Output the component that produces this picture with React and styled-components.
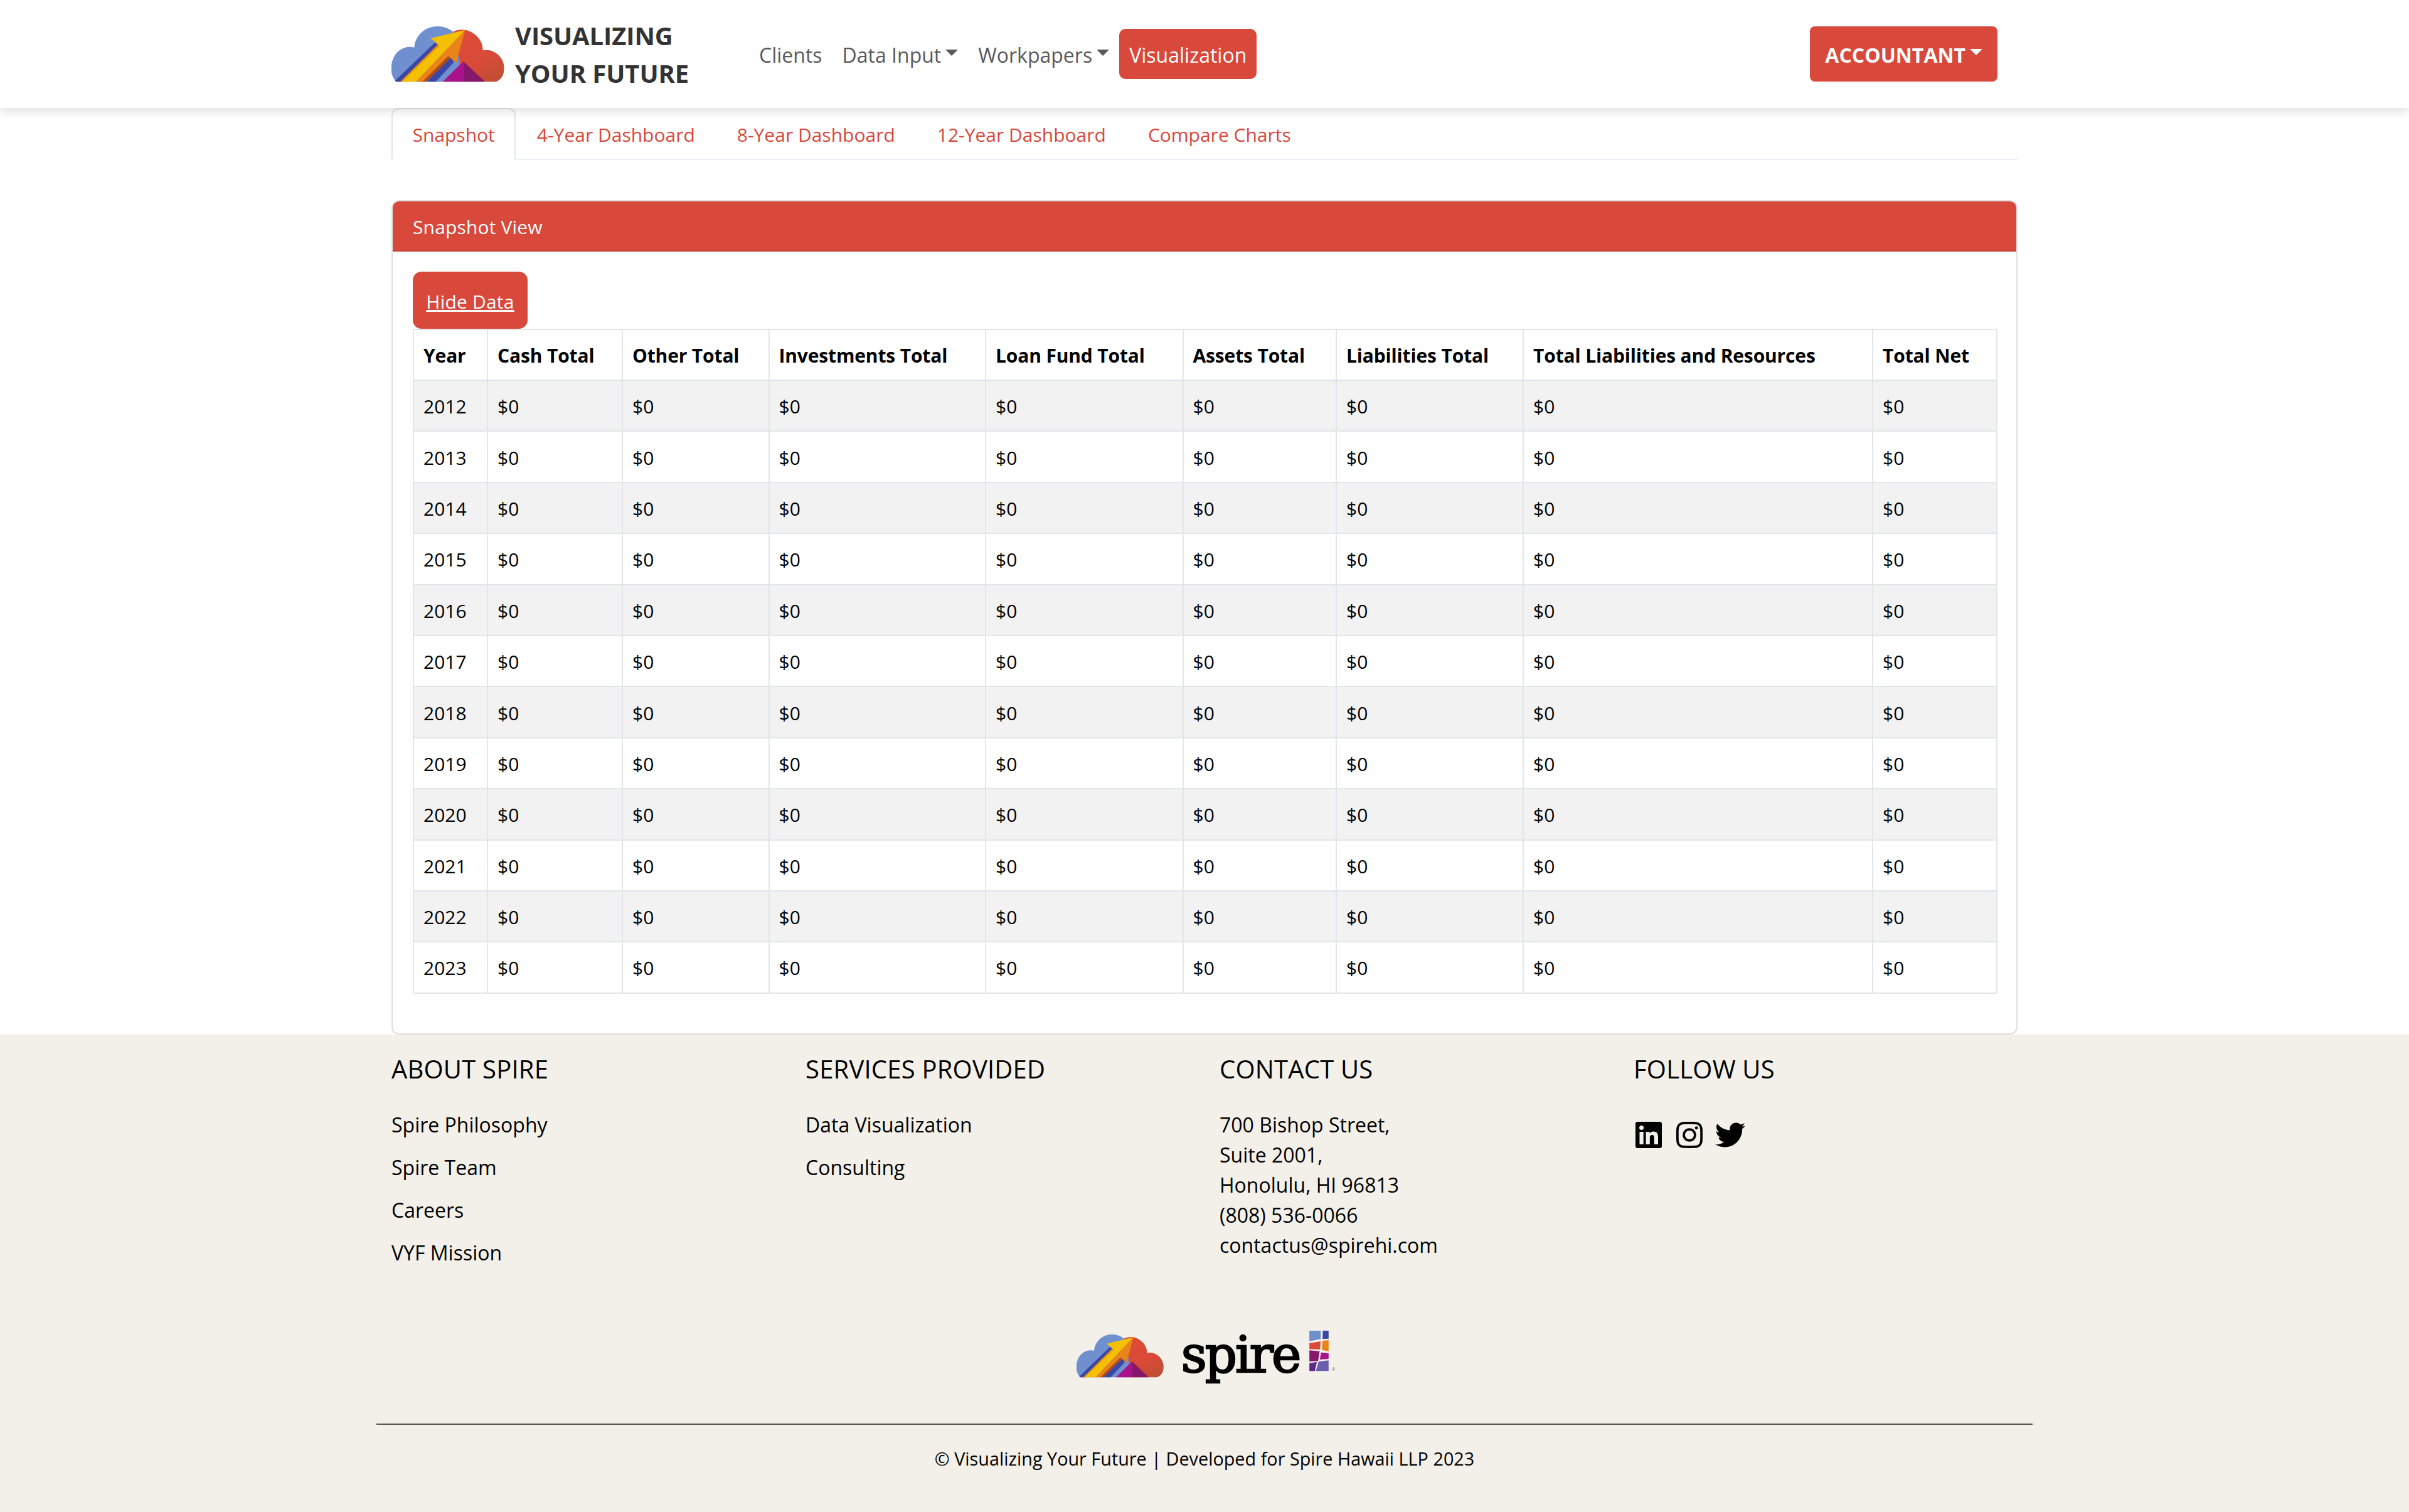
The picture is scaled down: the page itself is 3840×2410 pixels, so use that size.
import styled, { createGlobalStyle } from 'styled-components';
import { FaLinkedin, FaInstagram, FaTwitter } from 'react-icons/fa';

const RED = '#d8483b';

const GlobalStyle = createGlobalStyle`
  * { box-sizing: border-box; }
  html, body { margin: 0; background: #fff; }
  body {
    font-family: 'Open Sans', 'Noto Sans', sans-serif;
    font-size: 30px;
    line-height: 1.5;
    color: #000;
  }
`;

const Page = styled.div`
  min-height: 2410px;
  display: flex;
  flex-direction: column;
`;

const Header = styled.header`
  position: relative;
  z-index: 2;
  height: 172px;
  background: #fff;
  box-shadow: 0 4px 16px rgba(0, 0, 0, 0.14);
`;

const HeaderInner = styled.div`
  width: 2640px;
  height: 100%;
  margin: 0 auto;
  padding: 0 56px 0 24px;
  display: flex;
  align-items: center;
`;

const Brand = styled.div`
  width: 570px;
  display: flex;
  align-items: center;
  gap: 17px;
`;

const BrandTitle = styled.div`
  padding-top: 1px;
  font-size: 40px;
  line-height: 60px;
  font-weight: 700;
  letter-spacing: -0.1px;
  color: #333;
`;

const Nav = styled.nav`
  display: flex;
  align-items: center;
  flex: 1;
`;

const NavLink = styled.a`
  display: flex;
  align-items: center;
  padding: 18px 16px 14px;
  font-size: 32px;
  line-height: 48px;
  border-radius: 10px;
  color: ${(p) => (p.$active ? '#fff' : '#595959')};
  background: ${(p) => (p.$active ? RED : 'transparent')};
`;

const Caret = styled.span`
  display: inline-block;
  width: 0;
  height: 0;
  margin-left: 7px;
  margin-bottom: 8px;
  border-top: 10px solid currentColor;
  border-left: 10px solid transparent;
  border-right: 10px solid transparent;
`;

const AccountButton = styled.button`
  display: flex;
  align-items: center;
  height: 88px;
  padding: 2px 24px 0;
  border: 0;
  border-radius: 8px;
  background: ${RED};
  color: #fff;
  font-family: inherit;
  font-size: 32px;
  font-weight: 700;
`;

const Main = styled.main`
  width: 2592px;
  margin: 0 auto;
`;

const Tabs = styled.ul`
  display: flex;
  margin: 0 0 64px;
  padding: 0;
  list-style: none;
  border-bottom: 2px solid #ecedf2;
`;

const Tab = styled.li`
  margin-bottom: -2px;
  padding: 18px 31.5px 14px;
  height: 83px;
  border: 2px solid ${(p) => (p.$active ? '#e3e5ea' : 'transparent')};
  border-bottom-color: ${(p) => (p.$active ? '#fff' : 'transparent')};
  border-radius: 12px 12px 0 0;
  background: ${(p) => (p.$active ? '#fff' : 'transparent')};
  color: ${RED};
  font-size: 30px;
  line-height: 45px;
`;

const Card = styled.section`
  border: 2px solid #dfdfdf;
  border-radius: 12px;
  overflow: hidden;
`;

const CardHeader = styled.div`
  margin: -2px -2px 0;
  padding: 20px 34px 15px;
  background: ${RED};
  border-bottom: 2px solid #c9433a;
  color: #fff;
  line-height: 45px;
  letter-spacing: 0.15px;
`;

const CardBody = styled.div`
  padding: 32px 32px 63px;
`;

const ToggleButton = styled.a`
  display: block;
  width: 183px;
  height: 91px;
  padding-top: 25px;
  text-align: center;
  border-radius: 14px;
  background: ${RED};
  color: #fff;
  line-height: 45px;
  letter-spacing: 0.2px;
  text-decoration: underline;
`;

const Table = styled.table`
  width: 2524px;
  table-layout: fixed;
  border-collapse: collapse;
`;

const HeadCell = styled.th`
  height: 81px;
  padding: 2px 15px 0;
  border: 2px solid #e3e5ea;
  border-bottom-width: 3px;
  text-align: left;
  font-weight: 700;
  letter-spacing: -0.15px;
  white-space: nowrap;
`;

const Row = styled.tr`
  background: ${(p) => (p.$striped ? '#f2f2f2' : '#fff')};
`;

const Cell = styled.td`
  height: 81.4px;
  padding: 2px 15px 0;
  border: 2px solid #e3e5ea;
`;

const Footer = styled.footer`
  flex: 1;
  background: #f3f0ea;
  padding-top: 31px;
`;

const FooterInner = styled.div`
  width: 2640px;
  margin: 0 auto;
`;

const Columns = styled.div`
  display: grid;
  grid-template-columns: repeat(4, 660px);
  padding: 0 24px;
  height: 441px;
`;

const ColumnTitle = styled.h5`
  margin: 0 0 41px;
  font-size: 40px;
  line-height: 48px;
  font-weight: 400;
  letter-spacing: 0.2px;
`;

const LinkList = styled.div`
  display: flex;
  flex-direction: column;
  gap: 20px;
  font-size: 32px;
  line-height: 48px;
`;

const Address = styled.div`
  font-size: 32px;
  line-height: 48px;
`;

const Socials = styled.div`
  display: flex;
  gap: 17px;
  margin-top: 57px;
  font-size: 48px;
  line-height: 0;
`;

const FooterLogo = styled.div`
  height: 148px;
  display: flex;
  align-items: flex-start;
  justify-content: center;
`;

const CloudSlot = styled.div`
  margin: 5px 28px 0 5px;
  line-height: 0;
`;

const SpireWord = styled.span`
  font-family: 'DejaVu Serif', serif;
  font-weight: 400;
  font-size: 80px;
  line-height: 1;
  letter-spacing: -3px;
  -webkit-text-stroke: 2.4px #000;
  margin: -1px 16px 0 0;
  color: #000;
`;

const Rule = styled.hr`
  margin: 0;
  border: 0;
  border-top: 2px solid #555;
`;

const Copyright = styled.p`
  margin: 32px 0 0;
  text-align: center;
  font-size: 28.8px;
  line-height: 43px;
`;

const CloudLogo = ({ width, height }) => (
  <svg width={width} height={height} viewBox="73 62 540 270">
    <defs>
      <linearGradient id="cloudRed" x1="0.2" y1="0" x2="0.8" y2="1">
        <stop offset="0" stopColor="#de4a38" />
        <stop offset="0.6" stopColor="#d94a38" />
        <stop offset="1" stopColor="#bf4f33" />
      </linearGradient>
    </defs>
    <path
      d="M365 92 C395 76 425 80 440 86 C480 100 510 135 510 180 C560 168 612 210 612 265 C612 300 595 322 572 330 L380 330 L370 200 Z"
      fill="url(#cloudRed)"
    />
    <path
      d="M96 330 C70 305 66 262 78 228 C94 178 140 155 182 166 C186 105 240 62 296 65 C326 66 352 76 372 95 L400 240 L384 330 Z"
      fill="#6f8fcf"
    />
    <path d="M90 325 L280 143 L298 154 L125 330 L95 330 Z" fill="#3a47a6" />
    <path d="M298 148 L306 156 L135 330 L115 330 Z" fill="#e8920f" />
    <path d="M425 82 L383 240 L345 207 L222 330 L190 330 Z" fill="#ea8419" />
    <path d="M425 82 L260 122 L303 158 L125 330 L190 330 Z" fill="#f4c000" />
    <path d="M345 207 L356 218 L240 330 L220 330 Z" fill="#b84a10" />
    <path d="M356 216 L372 236 L285 330 L240 330 Z" fill="#3a47a6" />
    <path d="M417 232 L417 330 L318 330 Z" fill="#a8138c" />
    <path d="M417 232 L520 330 L417 330 Z" fill="#85186a" />
  </svg>
);

const Mosaic = () => (
  <svg width="42" height="65" viewBox="106 90 125 195">
    <path d="M106 90 L160 90 L160 130 L106 140 Z" fill="#6f8fcf" />
    <path d="M170 90 L198 90 L198 128 L169 130 Z" fill="#3a47a6" />
    <path d="M106 150 L160 141 L157 180 L106 178 Z" fill="#d94a38" />
    <path d="M169 139 L198 135 L198 188 L166 182 Z" fill="#ea8419" />
    <path d="M106 184 L155 188 L148 235 L106 238 Z" fill="#85186a" />
    <path d="M162 194 L198 198 L198 225 L156 228 Z" fill="#a8138c" />
    <path d="M106 245 L142 240 L132 283 L106 283 Z" fill="#5b2a8c" />
    <path d="M150 238 L198 232 L198 283 L137 283 Z" fill="#6a5fae" />
    <text x="214" y="281" fontSize="20" fill="#666" fontFamily="Liberation Sans, sans-serif">®</text>
  </svg>
);

const tabs = ['Snapshot', '4-Year Dashboard', '8-Year Dashboard', '12-Year Dashboard', 'Compare Charts'];
const columns = ['Year', 'Cash Total', 'Other Total', 'Investments Total', 'Loan Fund Total', 'Assets Total', 'Liabilities Total', 'Total Liabilities and Resources', 'Total Net'];
const columnWidths = [118, 215, 233.5, 345.5, 314.5, 244.5, 298, 557, 198];
const years = [2012, 2013, 2014, 2015, 2016, 2017, 2018, 2019, 2020, 2021, 2022, 2023];

const App = () => (
  <Page>
    <GlobalStyle />
    <Header>
      <HeaderInner>
        <Brand>
          <CloudLogo width={180} height={90} />
          <BrandTitle>
            VISUALIZING
            <br />
            YOUR FUTURE
          </BrandTitle>
        </Brand>
        <Nav>
          <NavLink>Clients</NavLink>
          <NavLink>Data Input<Caret /></NavLink>
          <NavLink>Workpapers<Caret /></NavLink>
          <NavLink $active>Visualization</NavLink>
        </Nav>
        <AccountButton>ACCOUNTANT<Caret /></AccountButton>
      </HeaderInner>
    </Header>
    <Main>
      <Tabs>
        {tabs.map((tab, i) => (
          <Tab key={tab} $active={i === 0}>{tab}</Tab>
        ))}
      </Tabs>
      <Card>
        <CardHeader>Snapshot View</CardHeader>
        <CardBody>
          <ToggleButton>Hide Data</ToggleButton>
          <Table>
            <colgroup>
              {columnWidths.map((w, i) => <col key={i} width={w} />)}
            </colgroup>
            <thead>
              <tr>
                {columns.map((c) => <HeadCell key={c}>{c}</HeadCell>)}
              </tr>
            </thead>
            <tbody>
              {years.map((year, i) => (
                <Row key={year} $striped={i % 2 === 0}>
                  <Cell>{year}</Cell>
                  {columns.slice(1).map((c) => <Cell key={c}>$0</Cell>)}
                </Row>
              ))}
            </tbody>
          </Table>
        </CardBody>
      </Card>
    </Main>
    <Footer>
      <FooterInner>
        <Columns>
          <div>
            <ColumnTitle>ABOUT SPIRE</ColumnTitle>
            <LinkList>
              <span>Spire Philosophy</span>
              <span>Spire Team</span>
              <span>Careers</span>
              <span>VYF Mission</span>
            </LinkList>
          </div>
          <div>
            <ColumnTitle>SERVICES PROVIDED</ColumnTitle>
            <LinkList>
              <span>Data Visualization</span>
              <span>Consulting</span>
            </LinkList>
          </div>
          <div>
            <ColumnTitle>CONTACT US</ColumnTitle>
            <Address>
              700 Bishop Street,<br />
              Suite 2001,<br />
              Honolulu, HI 96813<br />
              (808) 536-0066<br />
              contactus@spirehi.com
            </Address>
          </div>
          <div>
            <ColumnTitle>FOLLOW US</ColumnTitle>
            <Socials>
              <FaLinkedin />
              <FaInstagram />
              <FaTwitter />
            </Socials>
          </div>
        </Columns>
        <FooterLogo>
          <CloudSlot><CloudLogo width={139} height={70} /></CloudSlot>
          <SpireWord>spire</SpireWord>
          <Mosaic />
        </FooterLogo>
        <Rule />
        <Copyright>© Visualizing Your Future | Developed for Spire Hawaii LLP 2023</Copyright>
      </FooterInner>
    </Footer>
  </Page>
);

export default App;
